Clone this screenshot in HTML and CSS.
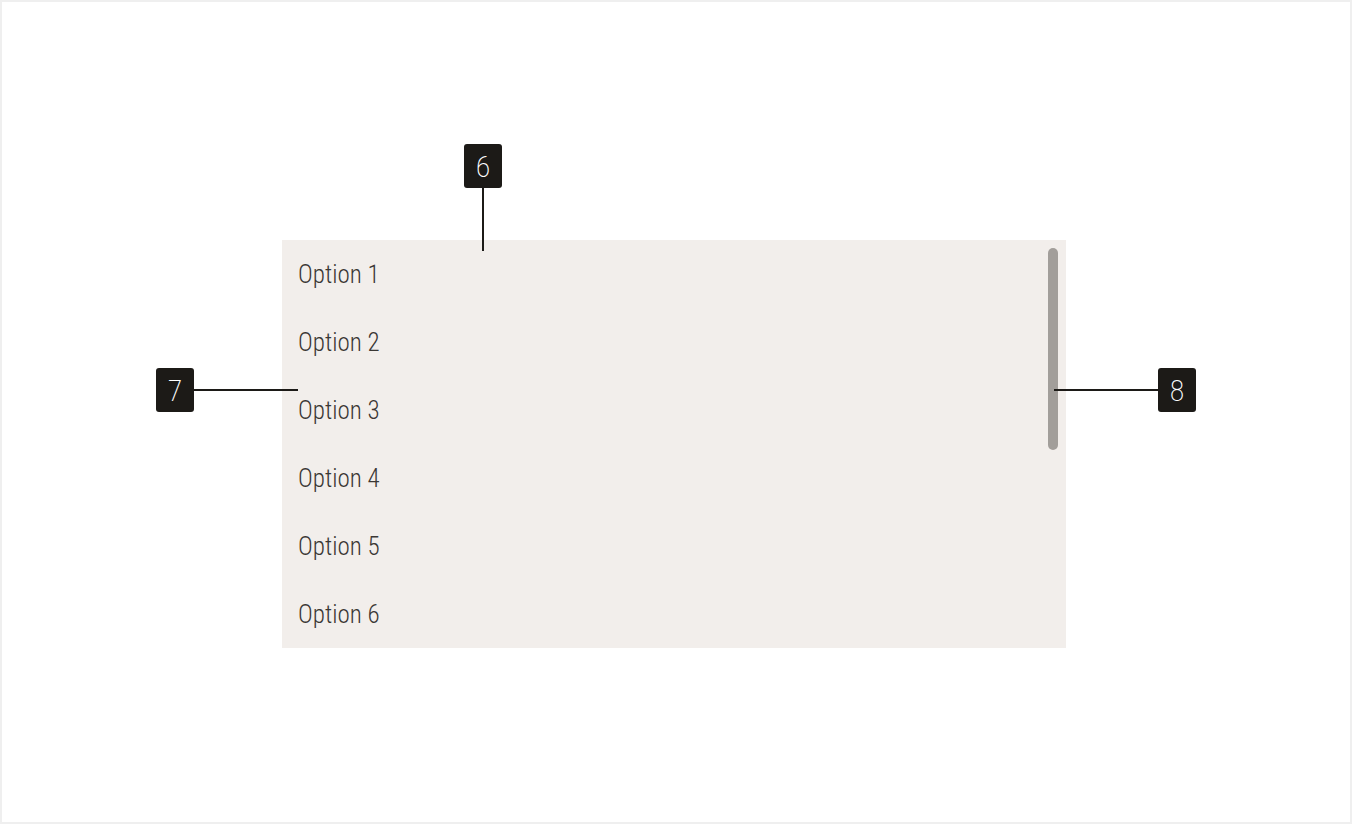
FILE: index.html
```html
<!DOCTYPE html>
<html lang="en">
<head>
<meta charset="utf-8">
<title>List box anatomy</title>
<link rel="stylesheet" href="styles.css">
</head>
<body>
<div class="frame">
  <div class="listbox">
    <ul class="options">
      <li class="option">Option 1</li>
      <li class="option">Option 2</li>
      <li class="option">Option 3</li>
      <li class="option">Option 4</li>
      <li class="option">Option 5</li>
      <li class="option">Option 6</li>
    </ul>
    <div class="scrollbar"></div>

    <div class="callout callout-top">
      <span class="badge">6</span>
      <span class="leader leader-v"></span>
    </div>
    <div class="callout callout-left">
      <span class="badge">7</span>
      <span class="leader leader-h"></span>
    </div>
    <div class="callout callout-right">
      <span class="leader leader-h"></span>
      <span class="badge">8</span>
    </div>
  </div>
</div>
</body>
</html>
```

FILE: styles.css
```css
* {
  box-sizing: border-box;
}

html, body {
  margin: 0;
  padding: 0;
  background: #ffffff;
}

.frame {
  width: 1352px;
  height: 824px;
  border: 2px solid #efefef;
  padding: 238px 0 0 280px;
}

.listbox {
  position: relative;
  width: 784px;
  height: 408px;
  background: #f2eeeb;
  display: flex;
}

.options {
  list-style: none;
  margin: 0;
  padding: 0;
  flex: 1;
}

.option {
  height: 68px;
  display: flex;
  align-items: center;
  padding-left: 16px;
  font-family: Roboto, "Open Sans", sans-serif;
  font-stretch: 75%;
  font-weight: 300;
  font-size: 25px;
  color: #3a3734;
}

.scrollbar {
  width: 10px;
  height: 202px;
  margin: 8px 8px 0 0;
  border-radius: 5px;
  background: #a29e9a;
}

/* annotation callouts sit over the list box */
.callout {
  position: absolute;
  display: flex;
  align-items: center;
}

.callout-top {
  left: 182px;
  top: -96px;
  flex-direction: column;
  width: 38px;
}

.callout-left {
  left: -126px;
  top: 128px;
}

.callout-right {
  left: 772px;
  top: 128px;
}

.badge {
  width: 38px;
  height: 44px;
  border-radius: 3px;
  background: #1c1a17;
  color: #ffffff;
  display: flex;
  align-items: center;
  justify-content: center;
  font-family: Roboto, "Open Sans", sans-serif;
  font-stretch: 75%;
  font-weight: 200;
  font-size: 30px;
}

.leader {
  background: #1c1a17;
}

.leader-v {
  width: 1.5px;
  height: 63px;
}

.leader-h {
  width: 104px;
  height: 1.5px;
}
```
